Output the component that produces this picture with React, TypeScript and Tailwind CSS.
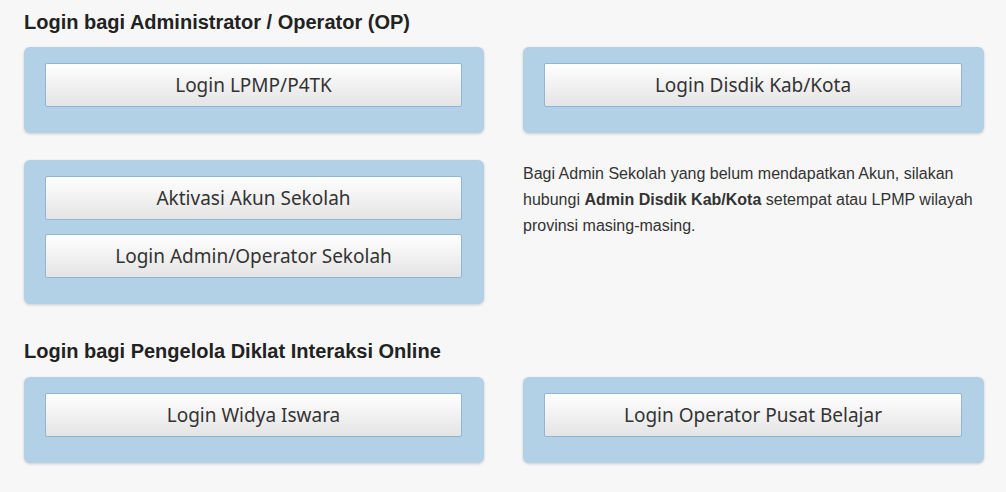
import React from "react";

const LoginButton = ({ label }: { label: string }) => {
  return (
    <button
      type="button"
      className="w-full h-[44px] flex items-center justify-center rounded-[2px] border border-[#8fb6d4] bg-gradient-to-b from-[#ffffff] to-[#e4e4e4] text-[19px] text-[#333333] font-['Noto_Sans',sans-serif] shadow-[inset_0_1px_0_#ffffff]"
    >
      {label}
    </button>
  );
};

const Panel = ({ children }: { children: React.ReactNode }) => {
  return (
    <div className="bg-[#b3d1e6] rounded-[6px] pt-[16px] pb-[26px] pl-[21px] pr-[22px] flex flex-col gap-[14px] shadow-[0_1px_3px_rgba(0,0,0,0.18)]">
      {children}
    </div>
  );
};

const App = () => {
  return (
    <div className="w-[1006px] h-[492px] bg-[#f7f7f7] px-[24px] pt-[10px] font-['Liberation_Sans',Arial,sans-serif] text-[#222222] overflow-hidden">
      {/* Administrator / Operator */}
      <h2 className="text-[20px] font-bold leading-[24px] mb-[13px]">
        Login bagi Administrator / Operator (OP)
      </h2>
      <div className="grid grid-cols-[460px_461px] gap-x-[39px] gap-y-[27px]">
        <Panel>
          <LoginButton label="Login LPMP/P4TK" />
        </Panel>
        <Panel>
          <LoginButton label="Login Disdik Kab/Kota" />
        </Panel>
        <Panel>
          <LoginButton label="Aktivasi Akun Sekolah" />
          <LoginButton label="Login Admin/Operator Sekolah" />
        </Panel>
        <p className="text-[16px] leading-[26px] text-[#333333] pt-[1px]">
          Bagi Admin Sekolah yang belum mendapatkan Akun, silakan hubungi{" "}
          <b>Admin Disdik Kab/Kota</b> setempat atau LPMP wilayah provinsi
          masing-masing.
        </p>
      </div>

      {/* Diklat Interaksi Online */}
      <h2 className="text-[20px] font-bold leading-[24px] mt-[35px] mb-[14px]">
        Login bagi Pengelola Diklat Interaksi Online
      </h2>
      <div className="grid grid-cols-[460px_461px] gap-x-[39px]">
        <Panel>
          <LoginButton label="Login Widya Iswara" />
        </Panel>
        <Panel>
          <LoginButton label="Login Operator Pusat Belajar" />
        </Panel>
      </div>
    </div>
  );
};

export default App;
